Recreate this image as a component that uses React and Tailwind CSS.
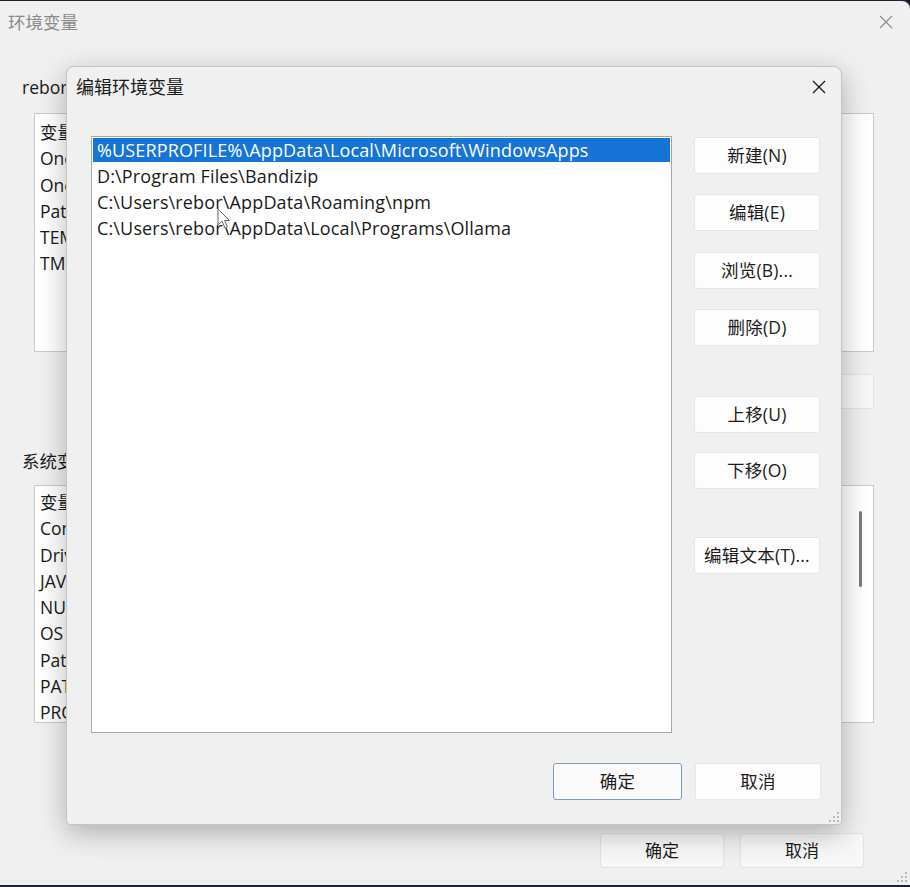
import React from 'react';

const font = "font-['Open_Sans','Noto_Sans_CJK_SC',sans-serif]";

const BgButton = ({ children, className = '' }) => (
  <div className={`h-[35px] w-[124px] flex items-center justify-center bg-[#f7f7f7] border border-[#e3e3e3] rounded-[3px] text-[17px] text-[#1a1a1a] ${className}`}>
    {children}
  </div>
);

const DlgButton = ({ children, className = '' }) => (
  <div className={`h-[37px] w-[126px] flex items-center justify-center bg-[#fdfdfd] border border-[#e6e6e6] rounded-[3px] text-[17.5px] tracking-[0.2px] text-[#1b1b1b] ${className}`}>
    {children}
  </div>
);

const Cursor = () => (
  <svg width="14" height="22" viewBox="0 0 14 22" className="absolute left-[217px] top-[208px]">
    <path d="M1 1 L1 17 L5 13 L8 20 L10.5 19 L7.5 12.5 L12.5 12.5 Z" fill="#ffffff" stroke="#6b6b6b" strokeWidth="1" strokeLinejoin="round" />
  </svg>
);

const Grip = () => (
  <svg width="12" height="12" viewBox="0 0 12 12">
    {[[9, 1], [9, 5], [5, 5], [9, 9], [5, 9], [1, 9]].map(([x, y], i) => (
      <rect key={i} x={x} y={y} width="2" height="2" fill="#b8b8b8" />
    ))}
  </svg>
);

const BackgroundWindow = () => {
  const userRows = ['OneDrive', 'OneDriveConsumer', 'Path', 'TEMP', 'TMP'];
  const sysRows = ['ComSpec', 'DriverData', 'JAVA_HOME', 'NUMBER_OF_PROCESSORS', 'OS', 'Path', 'PATHEXT', 'PROCESSOR_ARCHITECTURE'];
  return (
    <div className="h-[884px] mt-[1px] bg-[#f0f0f0] rounded-tr-[8px] flex flex-col">
      <div className="h-[42px] flex items-center justify-between pl-[8px] pr-[16px]">
        <span className="text-[17.5px] text-[#8a8a8a] pt-[1px]">环境变量</span>
        <svg width="16" height="16" viewBox="0 0 16 16">
          <path d="M2 2 L14 14 M14 2 L2 14" stroke="#8e8e8e" strokeWidth="1.2" />
        </svg>
      </div>
      <div className="flex flex-col px-[22px] pt-[32px]">
        <div className="text-[17.5px] text-[#1a1a1a] leading-[24px]">rebor 的用户变量(U)</div>
        <div className="mt-[14px] ml-[12px] mr-[14px] h-[239px] bg-white border border-[#c9c9c9] flex flex-col pt-[5px] pl-[5px] text-[17.5px] leading-[26.3px] text-[#1a1a1a]">
          <div>变量</div>
          {userRows.map((r) => <div key={r}>{r}</div>)}
        </div>
        <div className="mt-[22px] mr-[14px] flex justify-end gap-[12px]">
          <BgButton className="w-[100px]">新建(N)...</BgButton>
          <BgButton className="w-[100px]">编辑(E)...</BgButton>
          <BgButton className="w-[30px]"> </BgButton>
        </div>
        <div className="mt-[40px] text-[17.5px] text-[#1a1a1a] leading-[24px]">系统变量(S)</div>
        <div className="mt-[12px] ml-[12px] mr-[14px] h-[238px] bg-white border border-[#c9c9c9] flex pt-[3px] pl-[5px] text-[17.5px] leading-[26.3px] text-[#1a1a1a]">
          <div className="flex-1 flex flex-col">
            <div>变量</div>
            {sysRows.map((r, i) => <div key={i}>{r}</div>)}
          </div>
          <div className="w-[26px] flex justify-center pt-[22px]">
            <div className="w-[3px] h-[76px] bg-[#7a7a7a] rounded-full" />
          </div>
        </div>
        <div className="mt-[110px] mr-[24px] flex justify-end gap-[16px]">
          <BgButton>确定</BgButton>
          <BgButton>取消</BgButton>
        </div>
      </div>
      <div className="mt-auto flex justify-end pr-[2px] pb-[2px]"><Grip /></div>
    </div>
  );
};

const EditDialog = () => {
  const paths = [
    '%USERPROFILE%\\AppData\\Local\\Microsoft\\WindowsApps',
    'D:\\Program Files\\Bandizip',
    'C:\\Users\\rebor\\AppData\\Roaming\\npm',
    'C:\\Users\\rebor\\AppData\\Local\\Programs\\Ollama',
  ];
  return (
    <div className="absolute left-[66px] top-[66px] w-[776px] h-[759px] bg-[#f0f0f0] border border-[#c4c4c4] rounded-t-[8px] rounded-b-[4px] shadow-[0_8px_28px_rgba(0,0,0,0.28)] flex flex-col">
      <div className="h-[40px] flex items-center justify-between pl-[9px] pr-[14px]">
        <span className="text-[18px] text-[#1a1a1a] pt-[1px]">编辑环境变量</span>
        <svg width="16" height="16" viewBox="0 0 16 16">
          <path d="M2 2 L14 14 M14 2 L2 14" stroke="#1a1a1a" strokeWidth="1.3" />
        </svg>
      </div>
      <div className="flex pl-[24px] pt-[29px]">
        <div className="w-[581px] h-[597px] bg-white border border-[#a8a8a8] p-[1px] flex flex-col text-[18px] tracking-[0.15px] leading-[26px] text-[#1a1a1a]">
          {paths.map((p, i) => (
            <div key={i} className={`pl-[4px] whitespace-nowrap ${i === 0 ? 'bg-[#1674d6] text-white h-[24px] leading-[24px]' : 'h-[26px]'} ${i === 1 ? 'mt-[1px]' : ''}`}>
              {p}
            </div>
          ))}
        </div>
        <div className="ml-[22px] pt-[1px] flex flex-col">
          <DlgButton>新建(N)</DlgButton>
          <DlgButton className="mt-[20px]">编辑(E)</DlgButton>
          <DlgButton className="mt-[21px]">浏览(B)...</DlgButton>
          <DlgButton className="mt-[20px]">删除(D)</DlgButton>
          <DlgButton className="mt-[50px]">上移(U)</DlgButton>
          <DlgButton className="mt-[19px]">下移(O)</DlgButton>
          <DlgButton className="mt-[48px]">编辑文本(T)...</DlgButton>
        </div>
      </div>
      <div className="mt-[30px] flex justify-end gap-[13px] pr-[20px]">
        <DlgButton className="w-[129px] !border-[#7d9cc4] !bg-[#fbfbfb]">确定</DlgButton>
        <DlgButton>取消</DlgButton>
      </div>
      <div className="mt-auto flex justify-end pr-[1px] pb-[1px]"><Grip /></div>
    </div>
  );
};

export default function App() {
  return (
    <div className={`relative w-[910px] h-[887px] bg-[#1d2431] overflow-hidden ${font}`}>
      <BackgroundWindow />
      <EditDialog />
      <Cursor />
    </div>
  );
}
